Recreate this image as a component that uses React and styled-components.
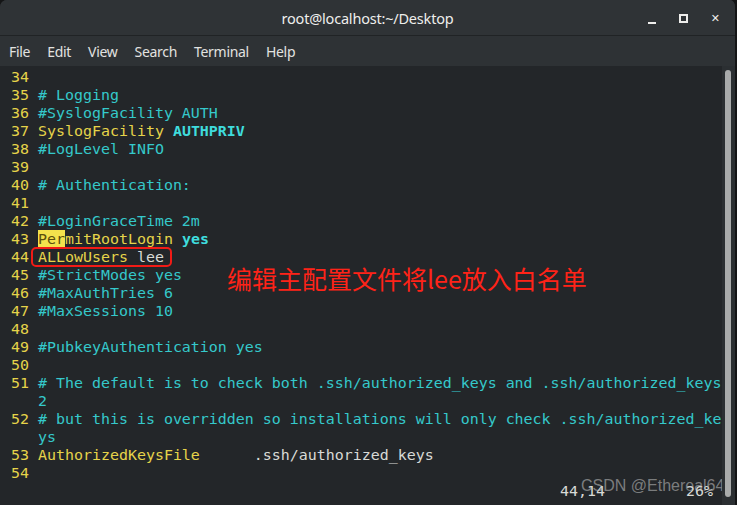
import styled, { createGlobalStyle } from "styled-components";

const Global = createGlobalStyle`
    html, body {
        margin: 0;
        padding: 0;
        background: #141516;
    }
`;

const YEL = "#e6d44a";
const CYAN = "#35c9cb";
const WHITE = "#d8dad6";

const lines = [
    { n: 34, parts: [] },
    { n: 35, parts: [["c", "# Logging"]] },
    { n: 36, parts: [["c", "#SyslogFacility AUTH"]] },
    { n: 37, parts: [["y", "SyslogFacility "], ["b", "AUTHPRIV"]] },
    { n: 38, parts: [["c", "#LogLevel INFO"]] },
    { n: 39, parts: [] },
    { n: 40, parts: [["c", "# Authentication:"]] },
    { n: 41, parts: [] },
    { n: 42, parts: [["c", "#LoginGraceTime 2m"]] },
    { n: 43, parts: [["h", "Per"], ["y", "mitRootLogin "], ["b", "yes"]] },
    { n: 44, boxed: true },
    { n: 45, parts: [["c", "#StrictModes yes"]] },
    { n: 46, parts: [["c", "#MaxAuthTries 6"]] },
    { n: 47, parts: [["c", "#MaxSessions 10"]] },
    { n: 48, parts: [] },
    { n: 49, parts: [["c", "#PubkeyAuthentication yes"]] },
    { n: 50, parts: [] },
    { n: 51, parts: [["c", "# The default is to check both .ssh/authorized_keys and .ssh/authorized_keys"]] },
    { n: "", parts: [["c", "2"]] },
    { n: 52, parts: [["c", "# but this is overridden so installations will only check .ssh/authorized_ke"]] },
    { n: "", parts: [["c", "ys"]] },
    { n: 53, parts: [["y", "AuthorizedKeysFile"], ["w", "      .ssh/authorized_keys"]] },
    { n: 54, parts: [] },
];

function Line({ line }) {
    const num = String(line.n).padStart(3, " ") + " ";
    return (
        <Row>
            <LineNo>{num}</LineNo>
            {line.boxed ? (
                <Boxed>
                    <Seg $kind="y">ALLowUsers</Seg>
                    <Seg $kind="w"> lee</Seg>
                </Boxed>
            ) : (
                line.parts.map((p, i) => (
                    <Seg key={i} $kind={p[0]}>{p[1]}</Seg>
                ))
            )}
        </Row>
    );
}

export default function App() {
    return (
        <>
            <Global />
            <Window>
                <TitleBar>
                    <Title>root@localhost:~/Desktop</Title>
                    <Controls>
                        <Minimize />
                        <Maximize />
                        <Close>✕</Close>
                    </Controls>
                </TitleBar>
                <MenuBar>
                    <MenuItem>File</MenuItem>
                    <MenuItem>Edit</MenuItem>
                    <MenuItem>View</MenuItem>
                    <MenuItem>Search</MenuItem>
                    <MenuItem>Terminal</MenuItem>
                    <MenuItem>Help</MenuItem>
                </MenuBar>
                <Body>
                    <Screen>
                        {lines.map((l, i) => (
                            <Line key={i} line={l} />
                        ))}
                        <Row>
                            <Ruler>{"44,14         26%"}</Ruler>
                        </Row>
                        <Note>编辑主配置文件将lee放入白名单</Note>
                        <Watermark>CSDN @Ethereal64</Watermark>
                    </Screen>
                    <ScrollTrack>
                        <Thumb />
                    </ScrollTrack>
                </Body>
            </Window>
        </>
    );
}

const Window = styled.div`
    width: 737px;
    height: 505px;
    box-sizing: border-box;
    border-radius: 7px 7px 0 0;
    overflow: hidden;
    background: #2f3336;
    display: flex;
    flex-direction: column;
    border-right: 2px solid #141516;
`;

const TitleBar = styled.div`
    height: 36px;
    flex-shrink: 0;
    position: relative;
    display: flex;
    align-items: center;
    justify-content: center;
    background: #2f3336;
    border-bottom: 1px solid #202325;
    box-sizing: border-box;
`;

const Title = styled.div`
    font-family: "Noto Sans", sans-serif;
    font-size: 14.5px;
    color: #eeeeec;
    letter-spacing: -0.2px;
`;

const Controls = styled.div`
    position: absolute;
    right: 15px;
    top: 0;
    height: 36px;
    display: flex;
    align-items: center;
    gap: 23px;
`;

const Minimize = styled.div`
    width: 8px;
    height: 2px;
    background: #eeeeec;
    margin-top: 9px;
`;

const Maximize = styled.div`
    width: 5px;
    height: 5px;
    border: 2px solid #eeeeec;
`;

const Close = styled.div`
    color: #eeeeec;
    font-family: "DejaVu Sans", sans-serif;
    font-size: 11px;
    font-weight: bold;
    line-height: 1;
`;

const MenuBar = styled.div`
    height: 30px;
    flex-shrink: 0;
    display: flex;
    align-items: center;
    padding-left: 9px;
    gap: 17px;
    background: #2e3235;
`;

const MenuItem = styled.div`
    font-family: "Noto Sans", sans-serif;
    font-size: 14px;
    color: #e2e2e0;
    letter-spacing: -0.3px;
`;

const Body = styled.div`
    flex: 1;
    display: flex;
    background: #232629;
`;

const Screen = styled.div`
    flex: 1;
    position: relative;
    padding: 2px 0 0 2px;
    font-family: "DejaVu Sans Mono", monospace;
    font-size: 14.94px;
    line-height: 18px;
    white-space: pre;
    overflow: hidden;
`;

const Row = styled.div`
    height: 18px;
    display: flex;
`;

const LineNo = styled.span`
    color: ${YEL};
`;

const kindStyles = {
    c: `color: ${CYAN};`,
    y: `color: ${YEL};`,
    w: `color: ${WHITE};`,
    b: `color: #3fdcdd; font-weight: bold;`,
    h: `color: #5a4f0c; background: #f3e24c;`,
};

const Seg = styled.span`
    ${(p) => kindStyles[p.$kind]}
`;

const Boxed = styled.span`
    position: relative;
    display: flex;
    &::after {
        content: "";
        position: absolute;
        left: -7px;
        right: -8px;
        top: -1px;
        bottom: -1px;
        border: 2px solid #f21b16;
        border-radius: 5px;
    }
`;

const Ruler = styled.span`
    color: ${WHITE};
    padding-left: 558px;
`;

const Note = styled.div`
    position: absolute;
    left: 227px;
    top: 196px;
    font-family: "Noto Sans CJK SC", sans-serif;
    font-size: 25px;
    line-height: 32px;
    color: #ff2318;
    white-space: nowrap;
`;

const Watermark = styled.div`
    position: absolute;
    left: 581px;
    top: 411px;
    font-family: "Liberation Sans", sans-serif;
    font-size: 16px;
    color: rgba(200, 200, 200, 0.55);
    white-space: nowrap;
`;

const ScrollTrack = styled.div`
    width: 13px;
    flex-shrink: 0;
    background: #2b2f32;
    padding: 4px 0 8px 3px;
    box-sizing: border-box;
    display: flex;
`;

const Thumb = styled.div`
    width: 6px;
    background: #a9abab;
    border-radius: 3px;
`;
